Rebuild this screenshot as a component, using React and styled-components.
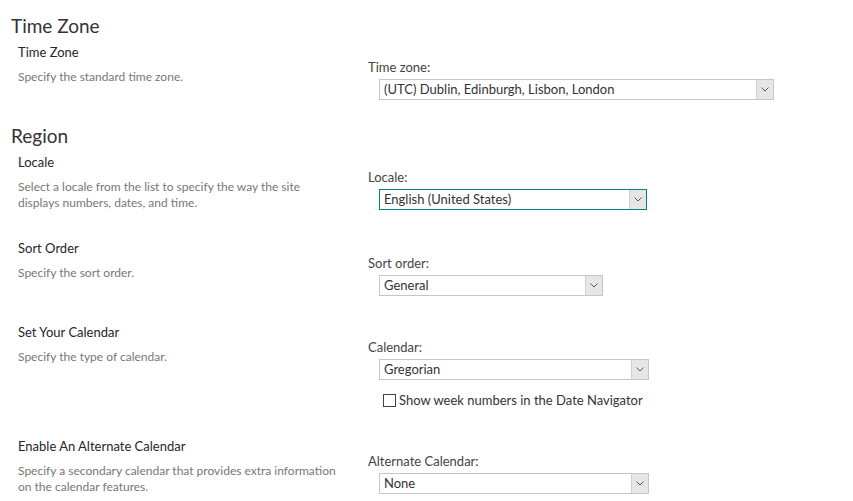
import React from "react";
import styled, { createGlobalStyle } from "styled-components";

const GlobalStyle = createGlobalStyle`
  body {
    margin: 0;
    background: #ffffff;
    font-family: "Lato", "Liberation Sans", sans-serif;
    color: #333333;
  }
`;

const Page = styled.div`
  padding: 14px 0 0 11px;
`;

const Section = styled.section`
  & + & {
    margin-top: 24px;
  }
`;

const SectionTitle = styled.h2`
  margin: 0 0 5px 0;
  font-size: 19px;
  line-height: 24px;
  font-weight: 400;
  color: #333333;
`;

const Row = styled.div`
  display: grid;
  grid-template-columns: 350px 1fr;
  margin-left: 7px;
  & + & {
    margin-top: 27.5px;
  }
`;

const Info = styled.div`
  display: flex;
  flex-direction: column;
  gap: 8px;
`;

const RowTitle = styled.div`
  font-size: 13px;
  line-height: 18px;
  color: #262626;
`;

const Description = styled.div`
  font-size: 12px;
  line-height: 16px;
  color: #777777;
  white-space: pre-line;
`;

const Field = styled.div`
  padding-top: 15px;
`;

const FieldLabel = styled.label`
  display: block;
  font-size: 13px;
  line-height: 18px;
  color: #444444;
`;

const Select = styled.div`
  box-sizing: border-box;
  display: flex;
  align-items: stretch;
  width: ${(p) => p.width}px;
  height: 21px;
  margin: 3px 0 0 11px;
  border: 1px solid ${(p) => (p.focused ? "#038387" : "#c6c6c6")};
  background: #ffffff;
`;

const SelectValue = styled.span`
  flex: 1;
  padding-left: 4px;
  font-size: 13px;
  line-height: 19px;
  color: #333333;
  white-space: nowrap;
  overflow: hidden;
`;

const ArrowBox = styled.span`
  box-sizing: border-box;
  display: flex;
  align-items: center;
  justify-content: center;
  width: 17px;
  background: #e6e6e6;
  border-left: 1px solid #d2d2d2;
  svg {
    width: 8px;
    height: 5px;
  }
`;

const CheckRow = styled.label`
  display: flex;
  align-items: center;
  gap: 3px;
  margin: 11px 0 0 15px;
  font-size: 13px;
  line-height: 18px;
  color: #333333;
`;

const CheckBox = styled.span`
  box-sizing: border-box;
  width: 13px;
  height: 13px;
  border: 1px solid #444444;
  background: #ffffff;
`;

const Chevron = () => (
  <svg viewBox="0 0 8 5" fill="none">
    <path d="M0.5 0.5 L4 4 L7.5 0.5" stroke="#555555" strokeWidth="1" />
  </svg>
);

const Dropdown = ({ value, width, focused }) => (
  <Select width={width} focused={focused}>
    <SelectValue>{value}</SelectValue>
    <ArrowBox>
      <Chevron />
    </ArrowBox>
  </Select>
);

const sections = [
  {
    title: "Time Zone",
    rows: [
      {
        title: "Time Zone",
        desc: "Specify the standard time zone.",
        label: "Time zone:",
        value: "(UTC) Dublin, Edinburgh, Lisbon, London",
        width: 395,
      },
    ],
  },
  {
    title: "Region",
    rows: [
      {
        title: "Locale",
        desc: "Select a locale from the list to specify the way the site\ndisplays numbers, dates, and time.",
        label: "Locale:",
        value: "English (United States)",
        width: 268,
        focused: true,
      },
      {
        title: "Sort Order",
        desc: "Specify the sort order.",
        label: "Sort order:",
        value: "General",
        width: 224,
      },
      {
        title: "Set Your Calendar",
        desc: "Specify the type of calendar.",
        label: "Calendar:",
        value: "Gregorian",
        width: 270,
        checkbox: "Show week numbers in the Date Navigator",
      },
      {
        title: "Enable An Alternate Calendar",
        desc: "Specify a secondary calendar that provides extra information\non the calendar features.",
        label: "Alternate Calendar:",
        value: "None",
        width: 270,
      },
    ],
  },
];

export default function App() {
  return (
    <>
      <GlobalStyle />
      <Page>
        {sections.map((section) => (
          <Section key={section.title}>
            <SectionTitle>{section.title}</SectionTitle>
            {section.rows.map((row) => (
              <Row key={row.title}>
                <Info>
                  <RowTitle>{row.title}</RowTitle>
                  <Description>{row.desc}</Description>
                </Info>
                <Field>
                  <FieldLabel>{row.label}</FieldLabel>
                  <Dropdown value={row.value} width={row.width} focused={row.focused} />
                  {row.checkbox && (
                    <CheckRow>
                      <CheckBox />
                      {row.checkbox}
                    </CheckRow>
                  )}
                </Field>
              </Row>
            ))}
          </Section>
        ))}
      </Page>
    </>
  );
}
